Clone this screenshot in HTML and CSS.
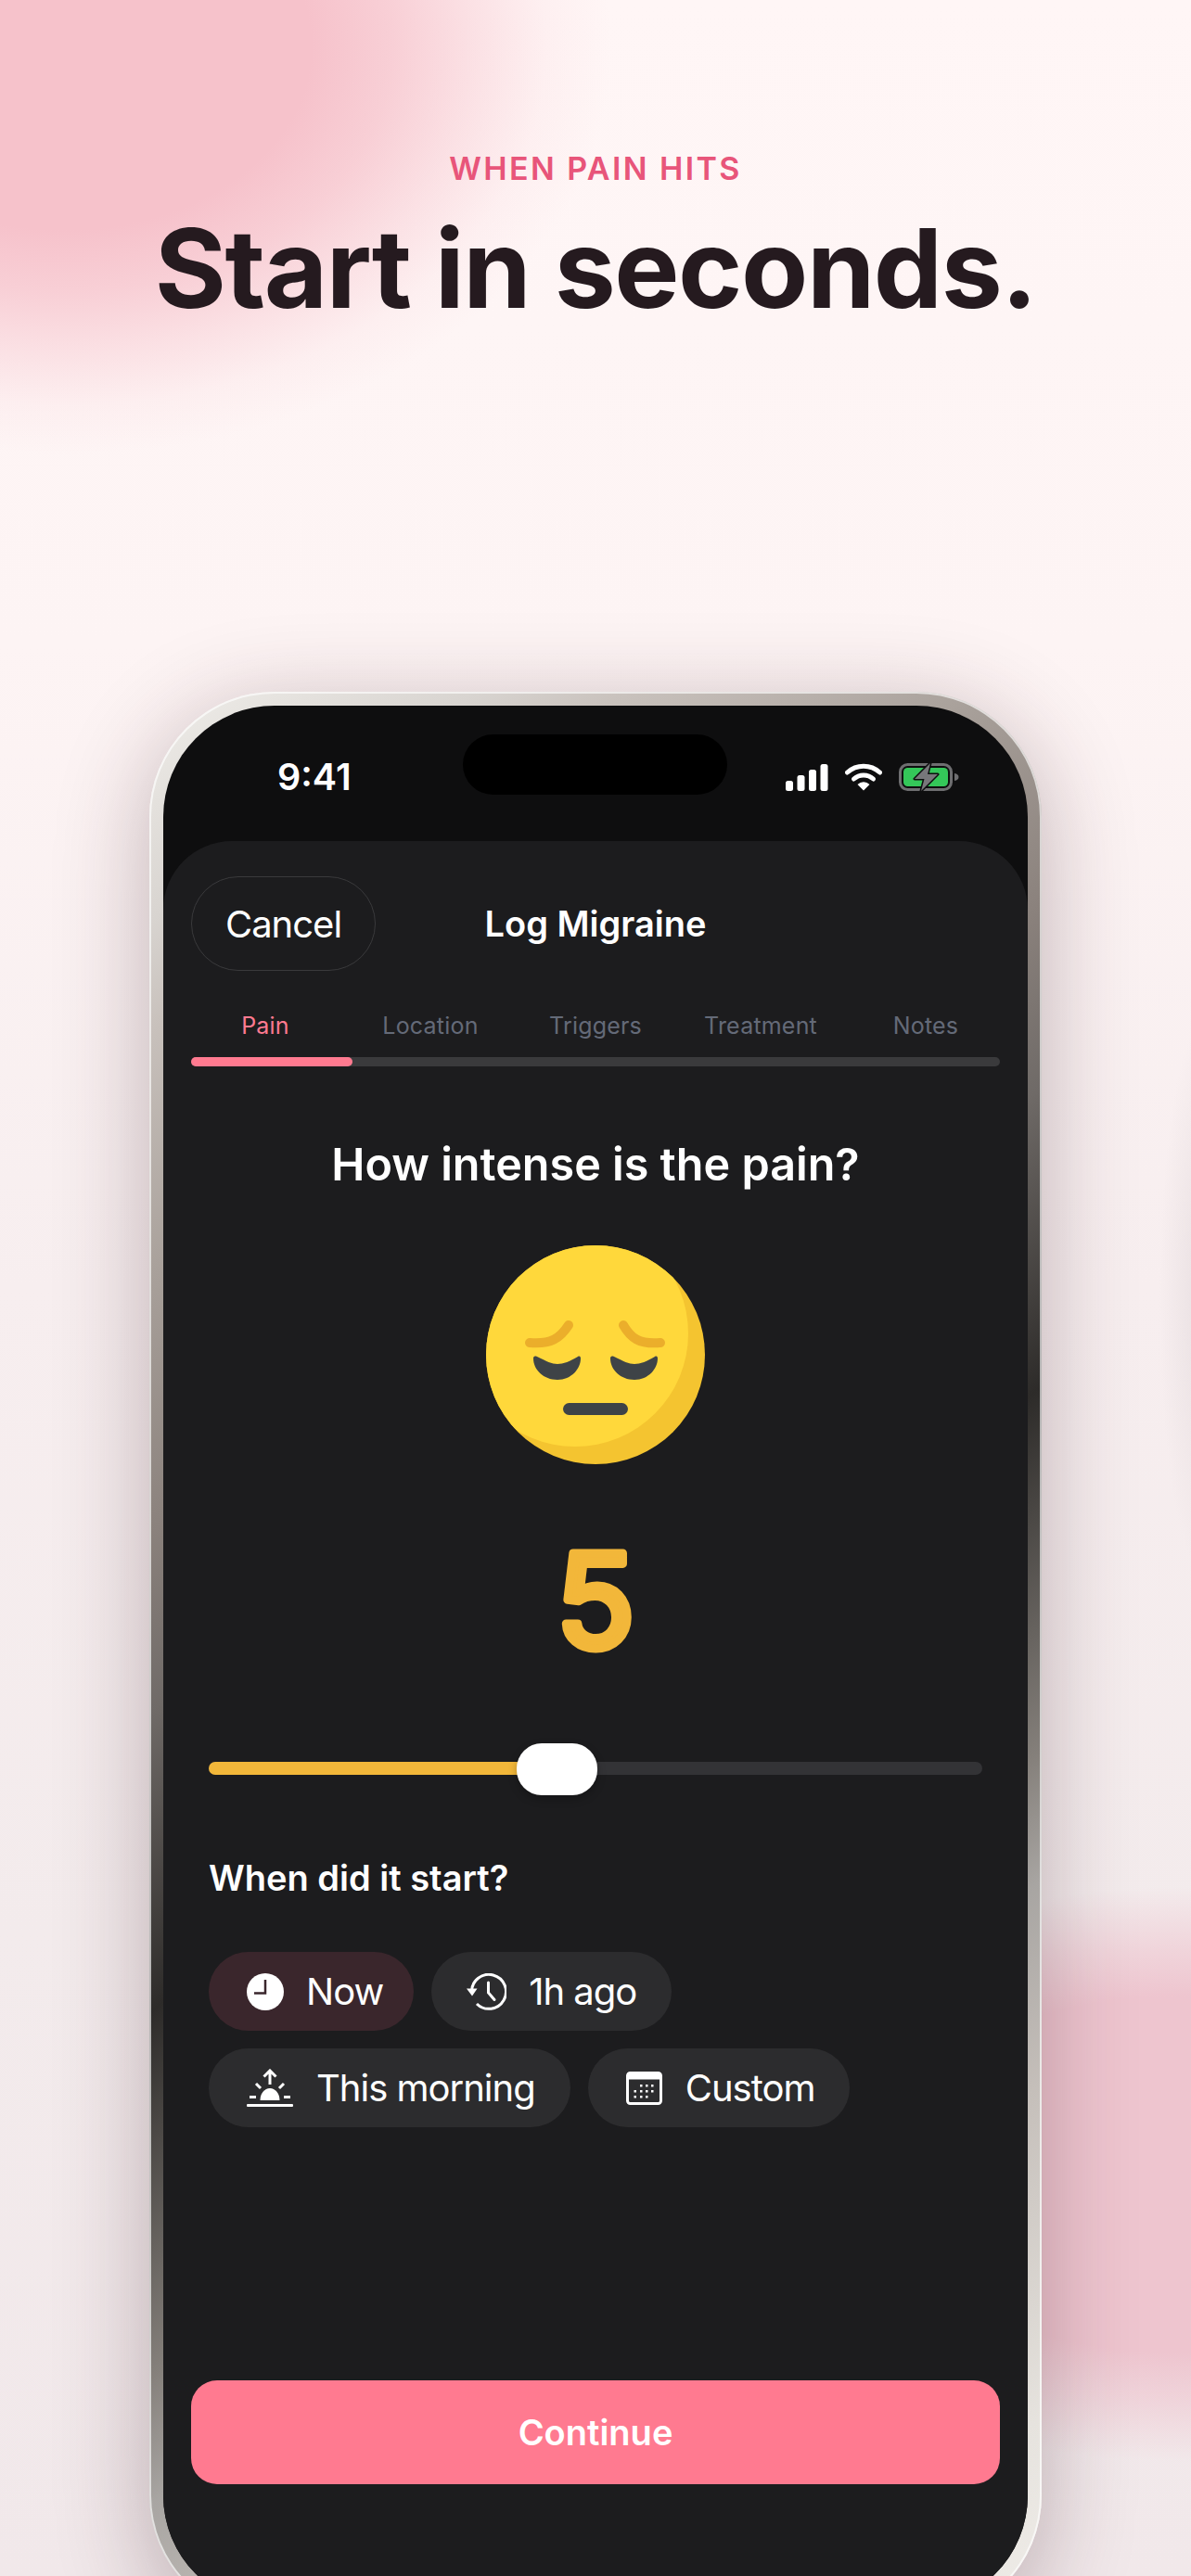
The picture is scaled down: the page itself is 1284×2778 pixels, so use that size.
FILE: index.html
```html
<!DOCTYPE html>
<html lang="en">
<head>
  <meta charset="UTF-8">
  <title>Log Migraine</title>
  <link rel="stylesheet" href="styles.css">
</head>
<body>
  <div class="page">
    <header class="hero">
      <p class="eyebrow">WHEN PAIN HITS</p>
      <h1 class="headline">Start in seconds.</h1>
    </header>

    <div class="phone">
      <div class="screen">
        <div class="island"></div>

        <div class="status">
          <span class="time">9:41</span>
          <div class="status-icons">
            <svg width="46" height="30" viewBox="0 0 46 30">
              <rect x="0" y="19" width="8" height="11" rx="2.500" fill="#fff"/>
              <rect x="12.500" y="13" width="8" height="17" rx="2.500" fill="#fff"/>
              <rect x="25" y="7" width="8" height="23" rx="2.500" fill="#fff"/>
              <rect x="37.500" y="1" width="8" height="29" rx="2.500" fill="#fff"/>
            </svg>
            <svg width="40" height="30" viewBox="0 0 40 30">
              <path d="M2.500 10 A26 26 0 0 1 37.500 10" fill="none" stroke="#fff" stroke-width="5" stroke-linecap="round"/>
              <path d="M9.500 17 A15.500 15.500 0 0 1 30.500 17" fill="none" stroke="#fff" stroke-width="5" stroke-linecap="round"/>
              <path d="M13.500 23 A9 9 0 0 1 26.500 23 L20 29.500 Z" fill="#fff"/>
            </svg>
            <svg width="65" height="32" viewBox="0 0 65 32">
              <rect x="1.500" y="2.500" width="55" height="27" rx="8" fill="none" stroke="#6e6e70" stroke-width="3"/>
              <rect x="5" y="6" width="48" height="20" rx="4.500" fill="#34c759"/>
              <path d="M60 12 C63 12.500 64.500 14 64.500 16 C64.500 18 63 19.500 60 20 Z" fill="#6e6e70"/>
              <path d="M34 1 L17 18 H27.500 L24 31 L42 13 H31 Z" fill="#77777a" stroke="#0e0e0f" stroke-width="3" stroke-linejoin="round" paint-order="stroke"/>
            </svg>
          </div>
        </div>

        <main class="sheet">
          <div class="topbar">
            <button class="cancel">Cancel</button>
            <span class="title">Log Migraine</span>
          </div>

          <nav class="tabs">
            <span class="tab tab-active">Pain</span>
            <span class="tab">Location</span>
            <span class="tab">Triggers</span>
            <span class="tab">Treatment</span>
            <span class="tab">Notes</span>
          </nav>
          <div class="progress"><div class="progress-fill"></div></div>

          <h2 class="question">How intense is the pain?</h2>

          <svg class="emoji" width="236" height="236" viewBox="0 0 236 236">
            <defs>
              <clipPath id="face"><circle cx="118" cy="118" r="118"/></clipPath>
            </defs>
            <circle cx="118" cy="118" r="118" fill="#f4c430"/>
            <circle cx="96" cy="95" r="122" fill="#ffd83b" clip-path="url(#face)"/>
            <path d="M47 105 C70 107 80 100 89 86" fill="none" stroke="#ebae2b" stroke-width="10" stroke-linecap="round"/>
            <path d="M188 105 C165 107 156 100 148 86" fill="none" stroke="#ebae2b" stroke-width="10" stroke-linecap="round"/>
            <path d="M51 122 C51 120 52 119 55 120 C65 125 71 128 77 128 C83 128 91 125 99 120 C101 119 102 120 102 122 C102 133 92 145 77 145 C62 145 51 134 51 122 Z" fill="#3e4347"/>
            <path d="M134 122 C134 120 135 119 138 120 C148 125 154 128 160 128 C166 128 174 125 182 120 C184 119 185 120 185 122 C185 133 175 145 160 145 C145 145 134 134 134 122 Z" fill="#3e4347"/>
            <rect x="83" y="170" width="70" height="13" rx="6.500" fill="#3e4347"/>
          </svg>

          <svg class="score" width="200" height="180" viewBox="0 0 200 180">
            <text class="score-text" x="100" y="136">5</text>
          </svg>

          <div class="slider">
            <div class="slider-fill"></div>
            <div class="slider-thumb"></div>
          </div>

          <h3 class="when">When did it start?</h3>

          <div class="chips">
            <span class="chip chip-active">
              <svg width="40" height="40" viewBox="0 0 40 40">
                <circle cx="20" cy="20" r="20" fill="#fff"/>
                <path d="M20 7 V21.500 H8" fill="none" stroke="#3a262c" stroke-width="2.500"/>
              </svg>
              Now
            </span>
            <span class="chip chip-history">
              <svg width="43" height="40" viewBox="0 0 43 40">
                <path d="M5.500 20 A18.500 18.500 0 1 1 11 33" fill="none" stroke="#fff" stroke-width="3"/>
                <path d="M0 16.500 H11.500 L6 24.500 Z" fill="#fff"/>
                <path d="M23.500 10 V21 L30 28.500" fill="none" stroke="#fff" stroke-width="3" stroke-linecap="round"/>
              </svg>
              1h ago
            </span>
            <span class="chip">
              <svg width="50" height="42" viewBox="0 0 50 42">
                <path d="M14.500 34 A10.500 13 0 0 1 35.500 34 Z" fill="#fff"/>
                <path d="M25 17 V2 M18.500 8.500 L25 2 L31.500 8.500" fill="none" stroke="#fff" stroke-width="3"/>
                <path d="M10 16 L15 21 M40 16 L35 21 M3 30.500 H10 M40 30.500 H47" fill="none" stroke="#fff" stroke-width="3"/>
                <rect x="0" y="38" width="50" height="3" rx="1" fill="#fff"/>
              </svg>
              This morning
            </span>
            <span class="chip">
              <svg width="39" height="36" viewBox="0 0 39 36">
                <rect x="1.500" y="1.500" width="36" height="33" rx="3" fill="none" stroke="#fff" stroke-width="3"/>
                <rect x="1.500" y="1.500" width="36" height="7" fill="#fff"/>
                <g fill="#fff">
                  <rect x="15" y="14" width="2.500" height="2.500"/><rect x="21" y="14" width="2.500" height="2.500"/><rect x="27" y="14" width="2.500" height="2.500"/>
                  <rect x="8.500" y="20" width="2.500" height="2.500"/><rect x="15" y="20" width="2.500" height="2.500"/><rect x="21" y="20" width="2.500" height="2.500"/><rect x="27" y="20" width="2.500" height="2.500"/>
                  <rect x="8.500" y="26" width="2.500" height="2.500"/><rect x="15" y="26" width="2.500" height="2.500"/><rect x="21" y="26" width="2.500" height="2.500"/>
                </g>
              </svg>
              Custom
            </span>
          </div>

          <button class="continue">Continue</button>
        </main>
      </div>
    </div>
  </div>
</body>
</html>
```

FILE: styles.css
```css
* {
  box-sizing: border-box;
}

html, body {
  margin: 0;
  height: 2778px;
}

body {
  font-family: Inter, "Liberation Sans", sans-serif;
}

.page {
  position: relative;
  width: 1284px;
  height: 2778px;
  overflow: hidden;
  background:
    radial-gradient(ellipse 590px 440px at 70px 50px, #f6c2cb 0%, #f6c2cb 45%, rgba(246, 194, 203, 0.75) 60%, rgba(246, 194, 203, 0.4) 75%, rgba(246, 194, 203, 0.12) 88%, rgba(246, 194, 203, 0) 100%),
    radial-gradient(ellipse 520px 310px at 1270px 2345px, #eec5cf 0%, #eec5cf 62%, rgba(238, 197, 207, 0.6) 78%, rgba(238, 197, 207, 0) 100%),
    radial-gradient(ellipse 50px 300px at 1300px 1400px, #e8dfe1 0%, rgba(232, 223, 225, 0) 100%),
    linear-gradient(180deg, #fff6f6 0%, #fdf4f4 25%, #f7eeef 50%, #f3ebec 75%, #f1e8ea 100%);
}

.hero {
  padding-top: 160px;
  text-align: center;
}

.eyebrow {
  margin: 0;
  font-size: 34px;
  line-height: 44px;
  font-weight: 600;
  letter-spacing: 2.400px;
  color: #e8557a;
}

.headline {
  margin: 20px 0 0;
  font-size: 118px;
  line-height: 130px;
  font-weight: 700;
  letter-spacing: -1.5px;
  color: #251a1f;
}

.phone {
  position: absolute;
  left: 161px;
  top: 746px;
  width: 962px;
  height: 2080px;
  padding: 15px;
  border-radius: 135px;
  background: linear-gradient(145deg, #f0eeea 0%, #d8d4d0 9%, #c9c2bd 13%, #a8a09a 23%, #8a817c 33%, #6f6a67 40%, #2d2b29 51.7%, #85807b 66%, #a8a5a2 71%, #c5bfba 79%, #e6e3de 92%, #f0ede9 100%);
  box-shadow: inset 0 0 0 2px rgba(255, 255, 255, 0.65), 0 20px 100px rgba(60, 30, 40, 0.3);
}

.screen {
  position: relative;
  height: 100%;
  border-radius: 120px;
  background: #0e0e0f;
  overflow: hidden;
}

.island {
  position: absolute;
  left: 323px;
  top: 31px;
  width: 285px;
  height: 65px;
  border-radius: 33px;
  background: #000;
}

.status {
  display: flex;
  align-items: center;
  justify-content: space-between;
  height: 146px;
  padding: 7px 74px 0 123px;
}

.time {
  font-size: 39.500px;
  font-weight: 600;
  color: #fff;
}

.status-icons {
  display: flex;
  align-items: center;
  gap: 18px;
}

.sheet {
  height: 1904px;
  padding: 38px 30px 0;
  border-radius: 74px 74px 0 0;
  background: #1c1c1e;
}

.topbar {
  position: relative;
  display: flex;
  align-items: center;
  justify-content: center;
  height: 102px;
}

.cancel {
  position: absolute;
  left: 0;
  top: 0;
  width: 199px;
  height: 102px;
  padding: 0;
  border: 1.500px solid #3a3a3c;
  border-radius: 51px;
  background: transparent;
  font: 400 40px Inter, sans-serif;
  letter-spacing: -1px;
  color: #fff;
}

.title {
  font-size: 38px;
  font-weight: 600;
  color: #fff;
}

.tabs {
  display: grid;
  grid-template-columns: repeat(5, 178px);
  justify-content: center;
  margin-top: 44px;
  text-align: center;
}

.tab {
  font-size: 25px;
  line-height: 30px;
  letter-spacing: 0.2px;
  color: #646a78;
}

.tab-active {
  color: #ff7a90;
}

.progress {
  height: 10px;
  margin-top: 19px;
  border-radius: 5px;
  background: #3a3a3c;
}

.progress-fill {
  width: 174px;
  height: 100%;
  border-radius: 5px;
  background: #ff7a90;
}

.question {
  margin: 71px 0 0;
  font-size: 48.500px;
  line-height: 70px;
  font-weight: 600;
  text-align: center;
  color: #fff;
}

.emoji {
  display: block;
  margin: 52px auto 0;
}

.score {
  display: block;
  margin: 62px auto 0;
}

.score-text {
  font-size: 140px;
  font-weight: 400;
  text-anchor: middle;
  fill: #f2b73a;
  stroke: #f2b73a;
  stroke-width: 9px;
  stroke-linejoin: round;
}

.slider {
  position: relative;
  height: 14px;
  margin: 79px 19px 0;
  border-radius: 7px;
  background: #333336;
}

.slider-fill {
  width: 340px;
  height: 100%;
  border-radius: 7px 0 0 7px;
  background: #f2b73a;
}

.slider-thumb {
  position: absolute;
  left: 332px;
  top: -20px;
  width: 87px;
  height: 56px;
  border-radius: 27px;
  background: #fff;
  box-shadow: 0 4px 10px rgba(0, 0, 0, 0.25);
}

.when {
  margin: 88px 0 0 19px;
  font-size: 38px;
  line-height: 46px;
  font-weight: 600;
  color: #fff;
}

.chips {
  display: flex;
  flex-wrap: wrap;
  gap: 19px;
  width: 760px;
  margin: 57px 0 0 19px;
}

.chip {
  display: flex;
  align-items: center;
  gap: 25px;
  height: 85px;
  padding: 0 38px 0 41px;
  border-radius: 43px;
  background: #2c2c2e;
  font-size: 40px;
  letter-spacing: -1px;
  color: #fff;
}

.chip-active {
  gap: 24px;
  padding-right: 33px;
  background: #3a262c;
}

.chip-history {
  padding-left: 38px;
  gap: 24px;
}

.continue {
  display: block;
  width: 872px;
  height: 112px;
  margin-top: 273px;
  border: 0;
  border-radius: 28px;
  background: #ff7a90;
  font: 600 38px Inter, sans-serif;
  color: #fff;
}
```
